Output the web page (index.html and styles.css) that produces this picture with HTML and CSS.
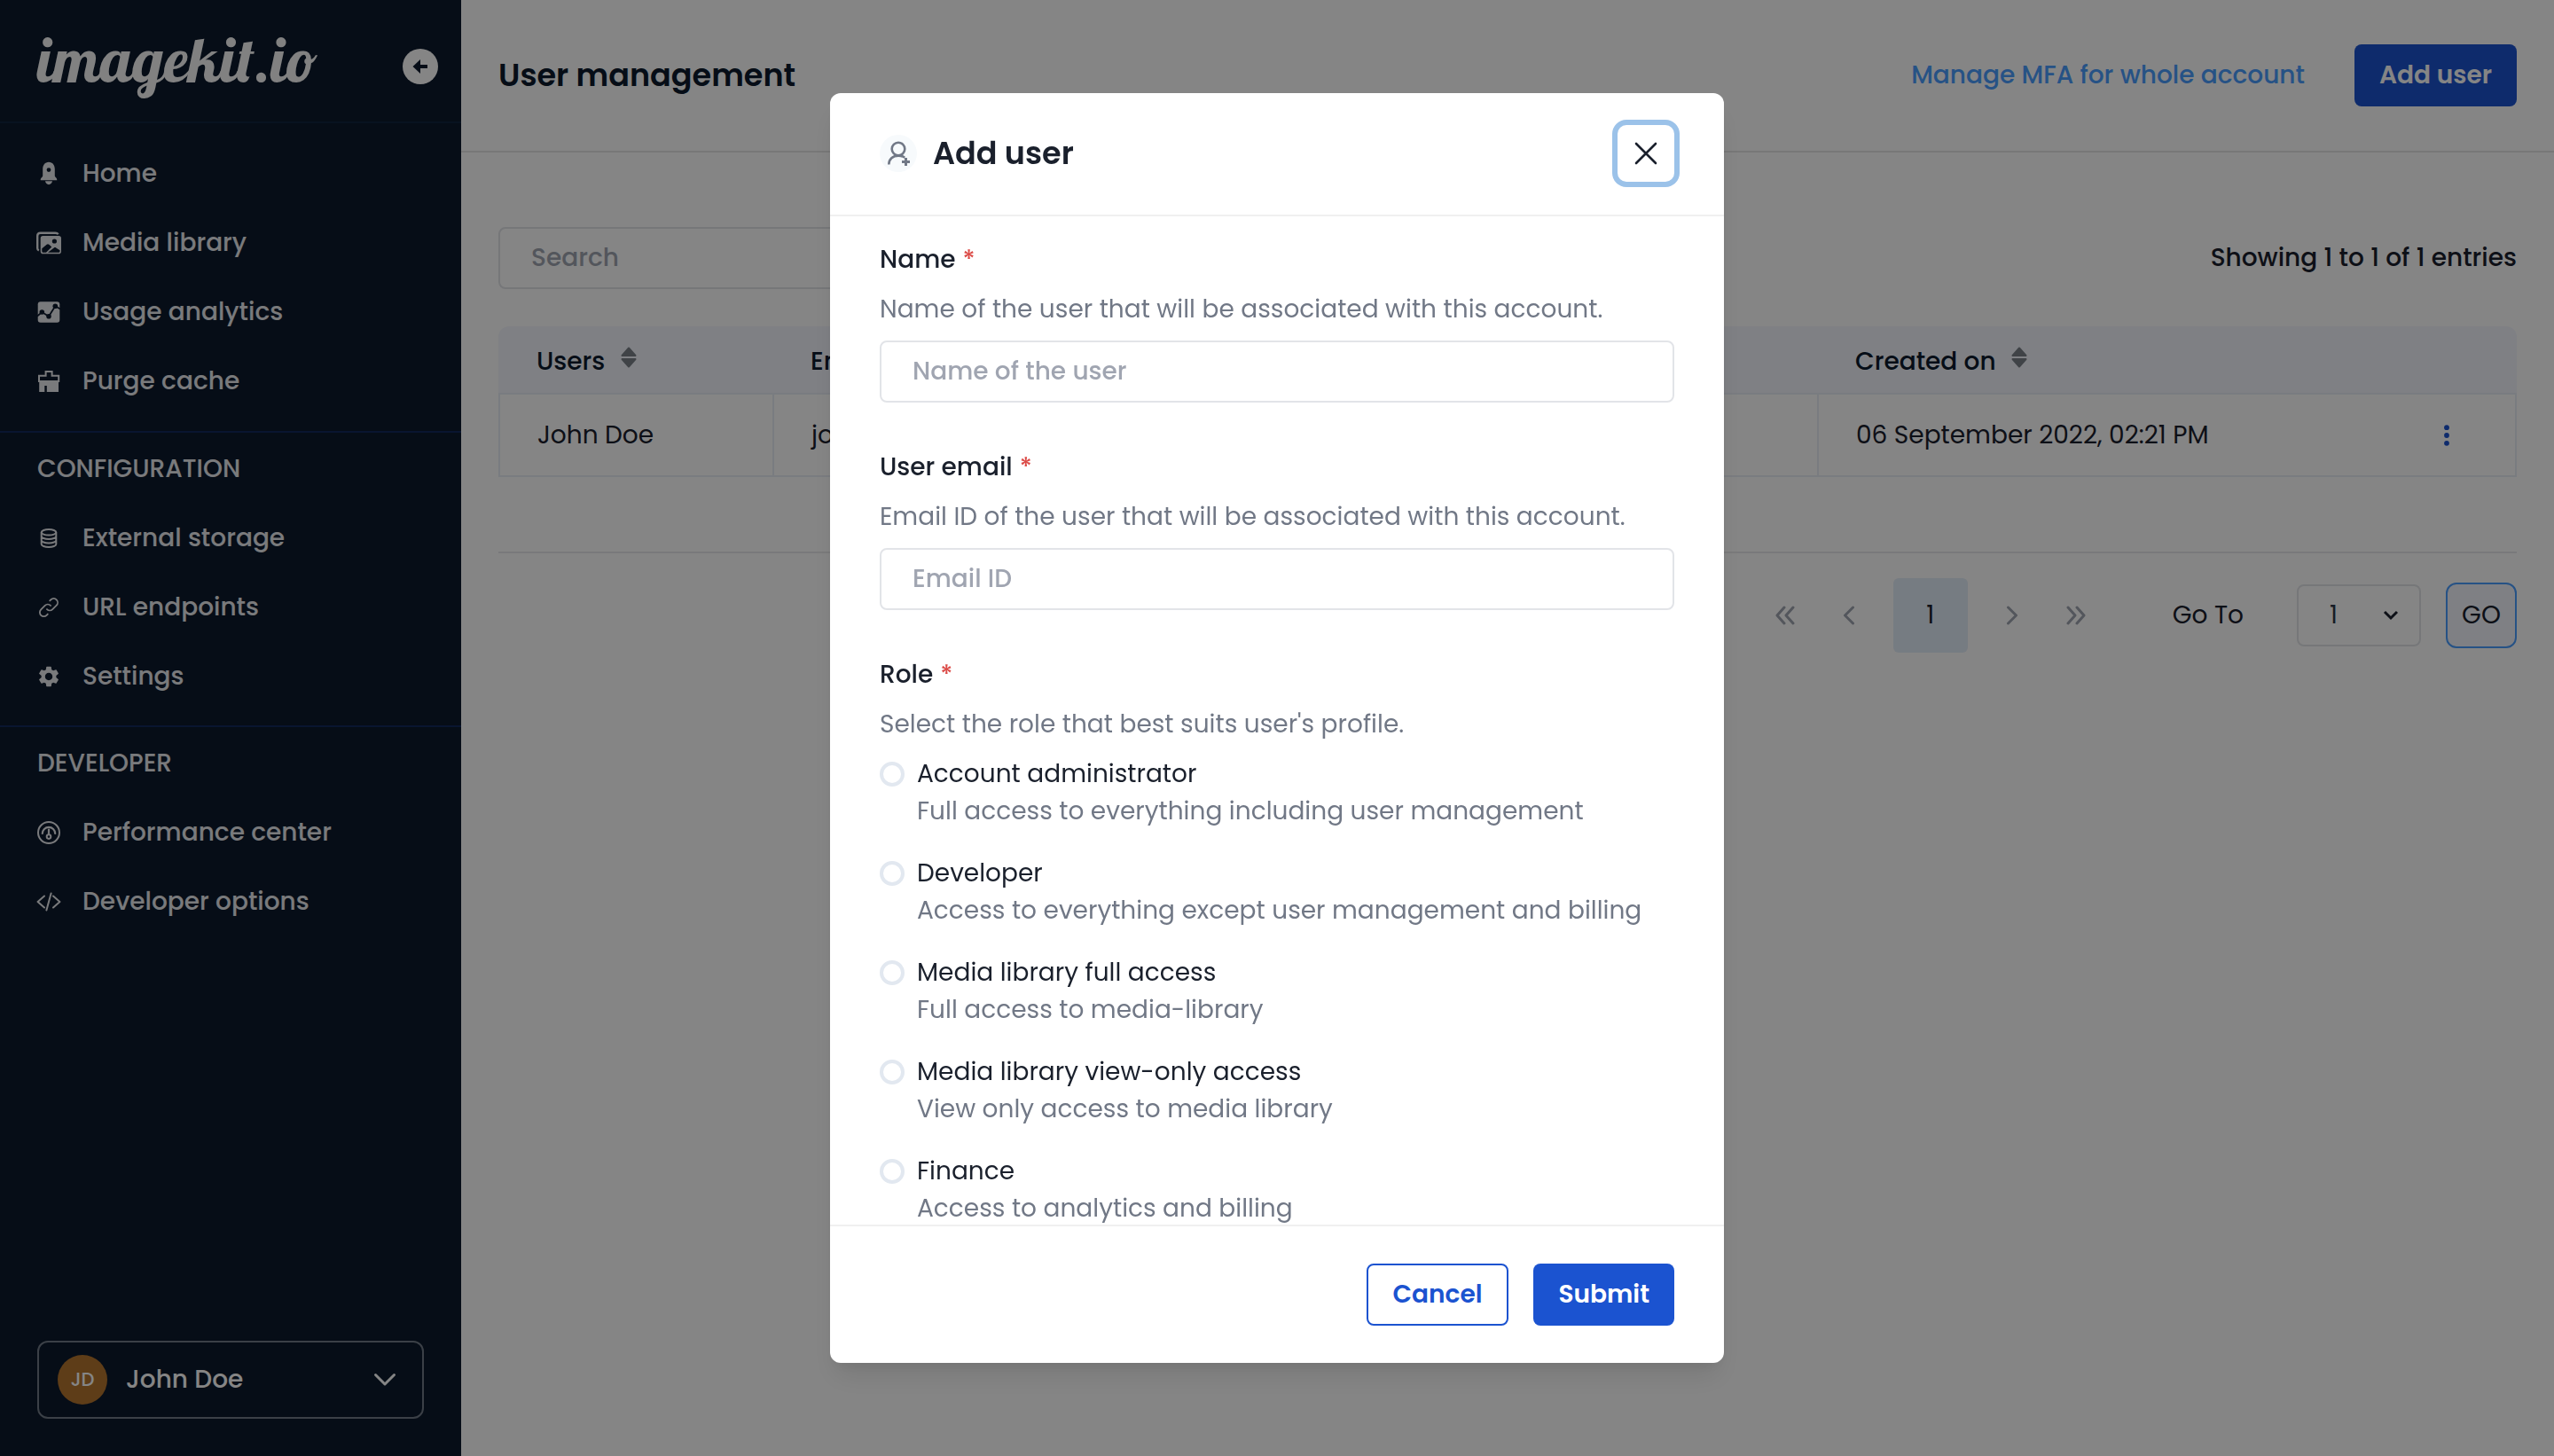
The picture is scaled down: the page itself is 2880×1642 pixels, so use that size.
FILE: index.html
```html
<!DOCTYPE html>
<html lang="en">
<head>
<meta charset="utf-8">
<meta name="viewport" content="width=device-width, initial-scale=1">
<title>User management</title>
<link rel="stylesheet" href="styles.css">
</head>
<body>
<div class="app">
  <aside class="sidebar">
    <div class="sidebar-header">
      <a class="logo" href="#">imagekit.io</a>
      <button class="collapse" type="button" aria-label="Collapse sidebar">
        <svg viewBox="0 0 40 40" width="40" height="40"><circle cx="20" cy="20" r="20" fill="currentColor"/><path d="M11.5 20L20 12V18H28V22H20V28Z" fill="#0c192c"/></svg>
      </button>
    </div>
    <nav class="nav" aria-label="Main">
      <ul class="nav-group">
        <li><a class="nav-item" href="#">
          <svg class="icon" viewBox="0 0 28 28"><path fill="currentColor" fill-rule="evenodd" d="M14 .7C9.8 .9 7.2 4 7.2 8.5V16C7.2 18 4.7 18 4.7 21.2H23.3C23.3 18 20.800 18 20.800 16V8.500C20.800 4 18.200 .9 14 .7ZM14 7.200A2.400 2.400 0 1 1 14 12A2.400 2.400 0 1 1 14 7.200ZM10 22.300H18C17.800 24.500 15.800 26 14 26.200C12.200 26 10.200 24.500 10 22.300Z"/></svg>
          Home</a></li>
        <li><a class="nav-item" href="#">
          <svg class="icon" viewBox="0 0 28 28"><path fill="none" stroke="currentColor" stroke-width="2.400" d="M2.800 22.500C1.700 22 1.200 21 1.200 20V6C1.200 4 2.500 2.700 4.500 2.700H21.500C23 2.700 24 3.200 24.600 4.300"/><path fill="currentColor" fill-rule="evenodd" d="M7.500 6H25.200A2.800 2.800 0 0 1 28 8.800V23.400A2.800 2.800 0 0 1 25.200 26.200H7.500A2.800 2.800 0 0 1 4.700 23.400V8.800A2.800 2.800 0 0 1 7.500 6ZM20.400 9.400A2.600 2.600 0 1 0 20.400 14.600A2.600 2.600 0 1 0 20.400 9.400ZM6.300 20.300V23.300C6.300 24.200 6.800 24.800 7.800 24.800H11L17.300 18.500L14.300 15.800C13.500 15 12.500 15 11.700 15.700ZM13 24.800H25C26 24.800 26.500 24.200 26.500 23.300V22.300L22.200 19.400C21.500 18.900 20.600 18.900 19.900 19.400Z"/></svg>
          Media library</a></li>
        <li><a class="nav-item" href="#">
          <svg class="icon" viewBox="0 0 28 28"><rect x="1.700" y="2.300" width="24.600" height="23.400" rx="3" fill="currentColor"/><g fill="#0c192c"><circle cx="6.300" cy="14" r="2.800"/><circle cx="14" cy="18.700" r="2.800"/><circle cx="21.300" cy="7.200" r="2.800"/></g><path fill="none" stroke="#0c192c" stroke-width="1.800" d="M1 18.500L6.300 14L14 18.700L21.300 7.200L27 10.600"/></svg>
          Usage analytics</a></li>
        <li><a class="nav-item" href="#">
          <svg class="icon" viewBox="0 0 28 28"><path fill="none" stroke="currentColor" stroke-width="2" d="M3 7.800H10.600V3H17.600V7.800H25.200V14H3Z"/><path fill="currentColor" d="M3.200 13H25V26H11.800V19H9.300V26H3.200Z"/></svg>
          Purge cache</a></li>
      </ul>
      <h2 class="nav-title">CONFIGURATION</h2>
      <ul class="nav-group">
        <li><a class="nav-item" href="#">
          <svg class="icon" viewBox="0 0 28 28" fill="none" stroke="currentColor" stroke-width="2"><ellipse cx="14" cy="7.300" rx="8.300" ry="3.200"/><path d="M5.700 7.300V20.700C5.700 22.500 9.400 23.900 14 23.900S22.300 22.500 22.300 20.700V7.300M5.700 11.700C5.700 13.500 9.400 14.900 14 14.900S22.300 13.500 22.300 11.700M5.700 16.200C5.700 18 9.400 19.400 14 19.400S22.300 18 22.300 16.200"/></svg>
          External storage</a></li>
        <li><a class="nav-item" href="#">
          <svg class="icon" viewBox="0 0 25 25" fill="none" stroke="currentColor" stroke-width="1.600" stroke-linecap="round"><path d="M14.328 10.672a4 4 0 00-5.656 0l-4 4a4 4 0 105.656 5.656l1.102-1.101m-.758-4.899a4 4 0 005.656 0l4-4a4 4 0 00-5.656-5.656l-1.100 1.100"/></svg>
          URL endpoints</a></li>
        <li><a class="nav-item" href="#">
          <svg class="icon" viewBox="0 0 24 24"><path fill="currentColor" d="M19.140 12.940c.04-.3.06-.61.06-.94 0-.32-.02-.64-.07-.94l2.030-1.580c.18-.14.23-.41.12-.61l-1.920-3.320c-.12-.22-.37-.29-.59-.22l-2.390.96c-.5-.38-1.030-.7-1.620-.94l-.36-2.540c-.04-.24-.24-.41-.48-.41h-3.840c-.24 0-.43.17-.47.41l-.36 2.540c-.59.24-1.130.57-1.620.94l-2.390-.96c-.22-.08-.47 0-.59.22L2.740 8.870c-.12.21-.08.47.12.61l2.030 1.580c-.05.3-.09.63-.09.94s.02.64.07.94l-2.030 1.580c-.18.14-.23.41-.12.61l1.920 3.320c.12.22.37.29.59.22l2.390-.96c.5.38 1.030.7 1.620.94l.36 2.540c.05.24.24.41.48.41h3.840c.24 0 .44-.17.47-.41l.36-2.540c.59-.24 1.130-.56 1.620-.94l2.390.96c.22.08.47 0 .59-.22l1.920-3.320c.12-.22.07-.47-.12-.61l-2.010-1.580zM12 15.600c-1.980 0-3.600-1.620-3.600-3.600s1.620-3.600 3.600-3.600 3.600 1.620 3.600 3.600-1.620 3.600-3.600 3.600z"/></svg>
          Settings</a></li>
      </ul>
      <h2 class="nav-title">DEVELOPER</h2>
      <ul class="nav-group">
        <li><a class="nav-item" href="#">
          <svg class="icon" viewBox="0 0 28 28" fill="none" stroke="currentColor" stroke-width="2"><circle cx="14" cy="14" r="12"/><path stroke-width="2.200" stroke-linecap="round" d="M6.800 15A7.200 7.200 0 0 1 21.200 15M14 10.500V16"/><circle cx="14" cy="18.600" r="2.300"/></svg>
          Performance center</a></li>
        <li><a class="nav-item" href="#">
          <svg class="icon" viewBox="0 0 28 28" fill="none" stroke="currentColor" stroke-width="2" stroke-linecap="round" stroke-linejoin="round"><path d="M9 7.500L1.600 14L9 20.500M19 7.500L26.400 14L19 20.500M16.600 4.500L11.400 23.500"/></svg>
          Developer options</a></li>
      </ul>
    </nav>
    <button class="account" type="button">
      <span class="avatar">JD</span>
      <span class="account-name">John Doe</span>
      <svg viewBox="0 0 26 16" width="26" height="16" fill="none" stroke="currentColor" stroke-width="3" stroke-linecap="round" stroke-linejoin="round"><path d="M2.500 2.500L13 13L23.500 2.500"/></svg>
    </button>
  </aside>

  <main class="main">
    <header class="page-header">
      <h1 class="page-title">User management</h1>
      <a class="mfa-link" href="#">Manage MFA for whole account</a>
      <button class="btn btn-primary" type="button">Add user</button>
    </header>
    <div class="content">
      <div class="toolbar">
        <input class="input search" type="search" placeholder="Search" aria-label="Search users">
        <p class="count">Showing 1 to 1 of 1 entries</p>
      </div>
      <table class="users">
        <thead>
          <tr>
            <th class="col-user" scope="col">Users <svg class="sort" viewBox="0 0 18 24" width="18" height="24"><path d="M9 1.500L16.500 10H1.500ZM9 22.500L16.500 14H1.500Z"/></svg></th>
            <th scope="col">Email</th>
            <th class="col-date" scope="col">Created on <svg class="sort" viewBox="0 0 18 24" width="18" height="24"><path d="M9 1.500L16.500 10H1.500ZM9 22.500L16.500 14H1.500Z"/></svg></th>
            <th class="col-menu" scope="col" aria-label="Actions"></th>
          </tr>
        </thead>
        <tbody>
          <tr>
            <td>John Doe</td>
            <td>johndoe@example.com</td>
            <td>06 September 2022, 02:21 PM</td>
            <td class="menu-cell"><button class="row-menu" type="button" aria-label="User actions"><svg viewBox="0 0 6 24" width="6" height="24" fill="currentColor"><circle cx="3" cy="3.200" r="2.900"/><circle cx="3" cy="12" r="2.900"/><circle cx="3" cy="20.800" r="2.900"/></svg></button></td>
          </tr>
        </tbody>
      </table>
      <div class="pagination">
        <button class="page-arrow" type="button" aria-label="First page"><svg viewBox="0 0 22 22" width="22" height="22"><path d="M10 2L2 11L10 20M20 2L12 11L20 20"/></svg></button>
        <button class="page-arrow" type="button" aria-label="Previous page"><svg viewBox="0 0 22 22" width="22" height="22"><path d="M15.500 2L6.500 11L15.500 20"/></svg></button>
        <button class="page-current" type="button">1</button>
        <button class="page-arrow" type="button" aria-label="Next page"><svg viewBox="0 0 22 22" width="22" height="22"><path d="M6.500 2L15.500 11L6.500 20"/></svg></button>
        <button class="page-arrow" type="button" aria-label="Last page"><svg viewBox="0 0 22 22" width="22" height="22"><path d="M2 2L10 11L2 20M12 2L20 11L12 20"/></svg></button>
        <label class="goto-label" for="goto">Go To</label>
        <span class="select-wrap">
          <select class="select" id="goto"><option>1</option></select>
          <svg class="select-arrow" viewBox="0 0 18 12" width="18" height="12"><path d="M2 2L9 9L16 2"/></svg>
        </span>
        <button class="go" type="button">GO</button>
      </div>
    </div>
  </main>
</div>

<div class="overlay">
  <form class="modal" role="dialog" aria-modal="true" aria-labelledby="modal-title">
    <header class="modal-header">
      <svg class="modal-icon" viewBox="0 0 42 42" width="42" height="42"><circle cx="21" cy="21" r="21" fill="#f7fafc"/><g fill="none" stroke="#717886"><circle cx="21" cy="16" r="7.300" stroke-width="2.600"/><path stroke-width="2.600" d="M10.300 33.500C10.300 27.500 14.800 23.600 21 23.600C24 23.600 26.300 24.300 28.200 25.700"/><path stroke-width="3" d="M29.500 26V35M25 30.500H34"/></g></svg>
      <h2 class="modal-title" id="modal-title">Add user</h2>
      <button class="close" type="button" aria-label="Close"><svg viewBox="0 0 26 26" width="26" height="26" fill="none" stroke="currentColor" stroke-width="2.600" stroke-linecap="round"><path d="M2 2L24 24M24 2L2 24"/></svg></button>
    </header>
    <div class="modal-body">
      <div class="field">
        <label class="label" for="name">Name<span class="required">*</span></label>
        <p class="help">Name of the user that will be associated with this account.</p>
        <input class="input" id="name" type="text" placeholder="Name of the user">
      </div>
      <div class="field">
        <label class="label" for="email">User email<span class="required">*</span></label>
        <p class="help">Email ID of the user that will be associated with this account.</p>
        <input class="input" id="email" type="email" placeholder="Email ID">
      </div>
      <fieldset class="roles">
        <legend class="label">Role<span class="required">*</span></legend>
        <p class="help">Select the role that best suits user's profile.</p>
        <label class="option"><input class="radio" type="radio" name="role"><span>Account administrator<span class="option-help">Full access to everything including user management</span></span></label>
        <label class="option"><input class="radio" type="radio" name="role"><span>Developer<span class="option-help">Access to everything except user management and billing</span></span></label>
        <label class="option"><input class="radio" type="radio" name="role"><span>Media library full access<span class="option-help">Full access to media-library</span></span></label>
        <label class="option"><input class="radio" type="radio" name="role"><span>Media library view-only access<span class="option-help">View only access to media library</span></span></label>
        <label class="option"><input class="radio" type="radio" name="role"><span>Finance<span class="option-help">Access to analytics and billing</span></span></label>
      </fieldset>
    </div>
    <footer class="modal-footer">
      <button class="btn btn-outline" type="button">Cancel</button>
      <button class="btn btn-primary" type="submit">Submit</button>
    </footer>
  </form>
</div>
</body>
</html>
```
FILE: styles.css
```css
*,
*::before,
*::after {
  box-sizing: border-box;
}

body {
  margin: 0;
  font-family: "Poppins", "Inter", sans-serif;
  font-size: 28px;
  line-height: 42px;
  color: #1a202c;
  background: #fff;
}

h1, h2, p, ul, fieldset, legend {
  margin: 0;
  padding: 0;
}

ul {
  list-style: none;
}

a {
  text-decoration: none;
}

button, input, select {
  font: inherit;
  color: inherit;
}

button {
  padding: 0;
  border: 0;
  background: none;
  cursor: pointer;
}

svg {
  display: block;
  flex: none;
}

.app {
  display: flex;
  min-height: 100vh;
}

/* Sidebar */
.sidebar {
  display: flex;
  flex-direction: column;
  flex: 0 0 520px;
  color: #e9eaee;
  background: #0c192c;
}

.sidebar-header {
  display: flex;
  align-items: center;
  justify-content: space-between;
  height: 139px;
  padding: 12px 26px 0 42px;
  border-bottom: 2px solid #10233f;
}

.logo {
  margin-bottom: 16px;
  font-family: "Lobster", "Liberation Serif", serif;
  font-size: 70px;
  line-height: 84px;
  color: #f8f8f8;
}

.collapse {
  color: #fff;
}

.nav {
  flex: 1;
}

.nav-group {
  padding: 18px 0 17px;
  border-bottom: 2px solid #132a5c;
}

.nav-title + .nav-group {
  padding: 0 0 16px;
}

.nav-group:last-child {
  border-bottom: 0;
}

.nav-item {
  display: flex;
  align-items: center;
  gap: 24px;
  height: 78px;
  padding: 0 41px;
  font-weight: 500;
  color: inherit;
}

.icon {
  width: 28px;
  height: 28px;
}

.nav-title {
  padding: 20px 42px 18px;
  font-size: 28px;
  font-weight: 500;
}

.account {
  display: flex;
  align-items: center;
  gap: 21px;
  height: 88px;
  margin: 0 42px 42px;
  padding: 0 29px 0 21px;
  border: 2px solid #717b88;
  border-radius: 12px;
  color: #fff;
}

.avatar {
  display: grid;
  place-items: center;
  width: 56px;
  height: 56px;
  border-radius: 50%;
  font-size: 21px;
  font-weight: 500;
  background: #b5752e;
}

.account-name {
  flex: 1;
  text-align: left;
  font-weight: 500;
}

/* Page */
.main {
  flex: 1;
  min-width: 0;
}

.page-header {
  display: flex;
  align-items: center;
  gap: 56px;
  height: 172px;
  padding: 0 42px;
  border-bottom: 2px solid #e6e6e6;
}

.page-title {
  flex: 1;
  font-size: 35px;
  font-weight: 600;
  color: #0c192c;
}

.mfa-link {
  font-weight: 500;
  color: #4a9dff;
}

.btn {
  height: 70px;
  padding: 0 28px;
  border-radius: 8px;
  font-weight: 600;
}

.btn-primary {
  color: #fff;
  background: #1b53d0;
}

.btn-outline {
  border: 2px solid #1b53d0;
  color: #1b53d0;
  background: #fff;
}

.content {
  padding: 84px 42px;
}

.toolbar {
  display: flex;
  align-items: center;
  justify-content: space-between;
  margin-bottom: 42px;
}

.input {
  display: block;
  width: 100%;
  height: 70px;
  padding: 0 35px;
  border: 2px solid #e2e4e8;
  border-radius: 8px;
  background: #fff;
  font-weight: 500;
  outline: 0;
}

.input::placeholder {
  color: #a0a5b1;
  opacity: 1;
}

.search {
  width: 600px;
}

.count {
  font-weight: 500;
}

.users {
  width: 100%;
  border-spacing: 0;
  table-layout: fixed;
}

.users th {
  height: 75px;
  padding: 4px 43px 0;
  text-align: left;
  font-weight: 500;
  color: #0c192c;
  background: #f3f6fd;
}

.users th:first-child {
  border-top-left-radius: 12px;
}

.users th:last-child {
  border-top-right-radius: 12px;
}

.users td {
  height: 95px;
  padding: 0 42px;
  border: solid #e9eef6;
  border-width: 2px 0 2px 2px;
}

.users .menu-cell {
  padding: 0 74px 0 0;
  border-width: 2px 2px 2px 0;
}

.col-user {
  width: 309px;
}

.col-date {
  width: 631px;
}

.col-menu {
  width: 158px;
}

.sort {
  display: inline-block;
  margin-left: 10px;
  vertical-align: 2px;
  fill: #7b8089;
  stroke: #7b8089;
  stroke-width: 2px;
  stroke-linejoin: round;
}

.row-menu {
  display: block;
  margin-left: auto;
  color: #1b53d0;
}

.pagination {
  display: flex;
  align-items: center;
  justify-content: flex-end;
  gap: 28px;
  margin-top: 84px;
  padding-top: 28px;
  border-top: 2px solid #e9e9eb;
}

.page-arrow {
  display: grid;
  place-items: center;
  width: 44px;
  height: 44px;
  fill: none;
  stroke: #a0a5b1;
  stroke-width: 3px;
  stroke-linecap: round;
  stroke-linejoin: round;
}

.page-current {
  width: 84px;
  height: 84px;
  border-radius: 6px;
  background: #e3edf9;
}

.goto-label {
  margin: 0 32px 0 59px;
}

.select-wrap {
  display: grid;
  align-items: center;
}

.select {
  grid-area: 1 / 1;
  width: 140px;
  height: 70px;
  padding: 0 0 0 35px;
  border: 2px solid #e2e4e8;
  border-radius: 8px;
  color: #2d3748;
  background: #fff;
  appearance: none;
}

.select-arrow {
  grid-area: 1 / 1;
  justify-self: end;
  margin-right: 25px;
  fill: none;
  stroke: #1a202c;
  stroke-width: 3px;
  pointer-events: none;
}

.go {
  width: 80px;
  height: 74px;
  border: 2px solid #4a9dff;
  border-radius: 12px;
  background: #f3f6fd;
}

/* Dialog */
.overlay {
  position: fixed;
  inset: 0;
  display: grid;
  place-items: center;
  background: rgba(0, 0, 0, 0.48);
}

.modal {
  display: flex;
  flex-direction: column;
  width: 1008px;
  max-width: 100%;
  max-height: calc(100vh - 210px);
  border-radius: 12px;
  background: #fff;
  box-shadow: 0 20px 30px -6px rgba(0, 0, 0, 0.1), 0 8px 12px -4px rgba(0, 0, 0, 0.05);
}

.modal-header {
  display: flex;
  align-items: center;
  flex: none;
  gap: 18px;
  height: 139px;
  padding: 0 56px 1px;
  border-bottom: 2px solid #f0f0f0;
}

.modal-title {
  flex: 1;
  font-size: 35px;
  font-weight: 600;
}

.close {
  display: grid;
  place-items: center;
  width: 64px;
  height: 64px;
  border-radius: 10px;
  box-shadow: 0 0 0 6px #9bc2e9;
}

.modal-body {
  flex: 1;
  min-height: 0;
  padding: 28px 56px 0;
  overflow-y: auto;
  scrollbar-width: none;
}

.field {
  margin-bottom: 52px;
}

.label {
  display: block;
  font-weight: 500;
}

.required {
  margin-left: 8px;
  color: #dc4c48;
}

.help {
  margin: 14px 0;
  color: #717886;
}

.roles {
  border: 0;
}

.option {
  display: flex;
  align-items: flex-start;
  gap: 14px;
  margin-bottom: 28px;
}

.option-help {
  display: block;
  color: #717886;
}

.radio {
  flex: none;
  width: 28px;
  height: 28px;
  margin: 7px 0;
  border: 4px solid #e2e8f0;
  border-radius: 50%;
  appearance: none;
}

.modal-footer {
  display: flex;
  justify-content: flex-end;
  flex: none;
  gap: 28px;
  padding: 42px 56px;
  border-top: 2px solid #f0f0f0;
}
```
